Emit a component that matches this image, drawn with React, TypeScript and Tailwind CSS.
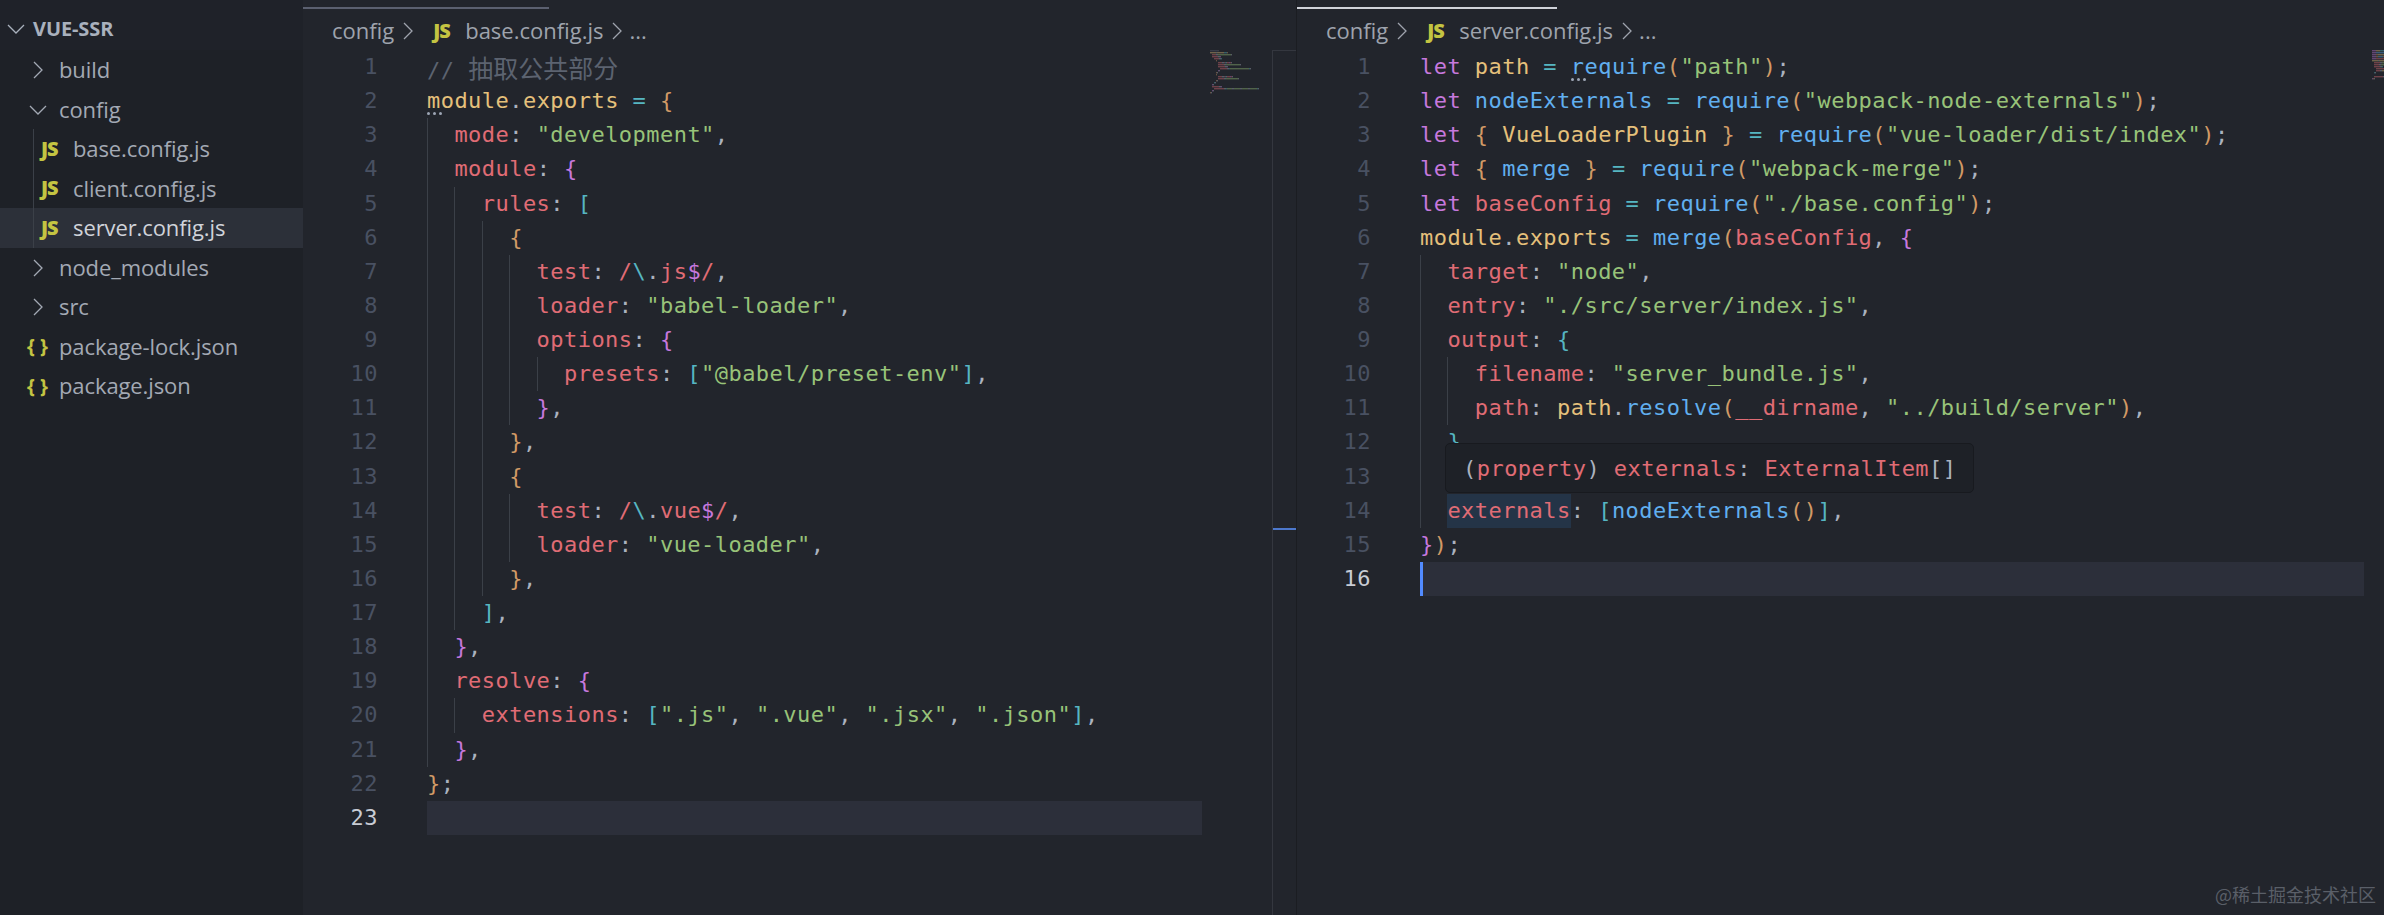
import type { ReactNode } from 'react';

const RED = 'text-[#e06c75]';
const GREEN = 'text-[#98c379]';
const YELLOW = 'text-[#e5c07b]';
const ORANGE = 'text-[#d19a66]';
const BLUE = 'text-[#61afef]';
const PURPLE = 'text-[#c678dd]';
const CYAN = 'text-[#56b6c2]';
const GRAY = 'text-[#abb2bf]';
const COMMENT = 'text-[#5c6370]';

const minimapColors: Record<string, string> = {
  [RED]: '#e06c75',
  [GREEN]: '#98c379',
  [YELLOW]: '#e5c07b',
  [ORANGE]: '#d19a66',
  [BLUE]: '#61afef',
  [PURPLE]: '#c678dd',
  [CYAN]: '#56b6c2',
  [GRAY]: '#abb2bf',
  [COMMENT]: '#5c6370',
};

type Token = [string, string, string?];
type Line = { indent: number; tokens: Token[] };

const l = (indent: number, ...tokens: Token[]): Line => ({ indent, tokens });

const baseConfigLines: Line[] = [
  l(0, ['// ', COMMENT], ['抽取公共部分', COMMENT, 'cjk']),
  l(0, ['module', YELLOW], ['.', GRAY], ['exports', YELLOW], [' = ', CYAN], ['{', ORANGE]),
  l(1, ['mode', RED], [': ', GRAY], ['"development"', GREEN], [',', GRAY]),
  l(1, ['module', RED], [': ', GRAY], ['{', PURPLE]),
  l(2, ['rules', RED], [': ', GRAY], ['[', CYAN]),
  l(3, ['{', ORANGE]),
  l(4, ['test', RED], [': ', GRAY], ['/', RED], ['\\', CYAN], ['.', GRAY], ['js', RED], ['$', PURPLE], ['/', RED], [',', GRAY]),
  l(4, ['loader', RED], [': ', GRAY], ['"babel-loader"', GREEN], [',', GRAY]),
  l(4, ['options', RED], [': ', GRAY], ['{', PURPLE]),
  l(5, ['presets', RED], [': ', GRAY], ['[', CYAN], ['"@babel/preset-env"', GREEN], [']', CYAN], [',', GRAY]),
  l(4, ['}', PURPLE], [',', GRAY]),
  l(3, ['}', ORANGE], [',', GRAY]),
  l(3, ['{', ORANGE]),
  l(4, ['test', RED], [': ', GRAY], ['/', RED], ['\\', CYAN], ['.', GRAY], ['vue', RED], ['$', PURPLE], ['/', RED], [',', GRAY]),
  l(4, ['loader', RED], [': ', GRAY], ['"vue-loader"', GREEN], [',', GRAY]),
  l(3, ['}', ORANGE], [',', GRAY]),
  l(2, [']', CYAN], [',', GRAY]),
  l(1, ['}', PURPLE], [',', GRAY]),
  l(1, ['resolve', RED], [': ', GRAY], ['{', PURPLE]),
  l(2, ['extensions', RED], [': ', GRAY], ['[', CYAN], ['".js"', GREEN], [', ', GRAY], ['".vue"', GREEN], [', ', GRAY], ['".jsx"', GREEN], [', ', GRAY], ['".json"', GREEN], [']', CYAN], [',', GRAY]),
  l(1, ['}', PURPLE], [',', GRAY]),
  l(0, ['}', ORANGE], [';', GRAY]),
  l(0),
];

const req = (path: string): Token[] => [
  [' = ', CYAN],
  ['require', BLUE],
  ['(', ORANGE],
  [path, GREEN],
  [')', ORANGE],
  [';', GRAY],
];

const serverConfigLines: Line[] = [
  l(0, ['let ', PURPLE], ['path', YELLOW], ...req('"path"')),
  l(0, ['let ', PURPLE], ['nodeExternals', BLUE], ...req('"webpack-node-externals"')),
  l(0, ['let ', PURPLE], ['{ ', ORANGE], ['VueLoaderPlugin', YELLOW], [' }', ORANGE], ...req('"vue-loader/dist/index"')),
  l(0, ['let ', PURPLE], ['{ ', ORANGE], ['merge', BLUE], [' }', ORANGE], ...req('"webpack-merge"')),
  l(0, ['let ', PURPLE], ['baseConfig', RED], ...req('"./base.config"')),
  l(0, ['module', YELLOW], ['.', GRAY], ['exports', YELLOW], [' = ', CYAN], ['merge', BLUE], ['(', ORANGE], ['baseConfig', RED], [', ', GRAY], ['{', PURPLE]),
  l(1, ['target', RED], [': ', GRAY], ['"node"', GREEN], [',', GRAY]),
  l(1, ['entry', RED], [': ', GRAY], ['"./src/server/index.js"', GREEN], [',', GRAY]),
  l(1, ['output', RED], [': ', GRAY], ['{', CYAN]),
  l(2, ['filename', RED], [': ', GRAY], ['"server_bundle.js"', GREEN], [',', GRAY]),
  l(2, ['path', RED], [': ', GRAY], ['path', YELLOW], ['.', GRAY], ['resolve', BLUE], ['(', ORANGE], ['__dirname', RED], [', ', GRAY], ['"../build/server"', GREEN], [')', ORANGE], [',', GRAY]),
  l(1, ['}', CYAN], [',', GRAY]),
  l(1),
  l(1, ['externals', RED, 'hover'], [': ', GRAY], ['[', CYAN], ['nodeExternals', BLUE], ['(', ORANGE], [')', ORANGE], [']', CYAN], [',', GRAY]),
  l(0, ['}', PURPLE], [')', ORANGE], [';', GRAY]),
  l(0),
];

const Chevron = ({ open, className }: { open?: boolean; className?: string }) => (
  <svg viewBox="0 0 18 18" className={className} fill="none" stroke="currentColor" strokeWidth="1.3">
    <path d={open ? 'M1 5l8 8 8-8' : 'M5 1l8 8-8 8'} />
  </svg>
);

const JsIcon = ({ className = '' }: { className?: string }) => (
  <span className={`font-['Open_Sans',sans-serif] text-[20px] font-extrabold tracking-[-1px] text-[#c4c442] ${className}`}>JS</span>
);

const TreeFolder = ({ name, open }: { name: string; open?: boolean }) => (
  <div className="relative flex h-[39.5px] items-center pl-[59px]">
    <Chevron open={open} className="absolute left-[29px] top-[11px] h-[18px] w-[18px]" />
    {name}
  </div>
);

const TreeFile = ({ name, active }: { name: string; active?: boolean }) => (
  <div className={`flex h-[39.5px] items-center pl-[41px] ${active ? 'bg-[#2c3039] text-[#d0d3da]' : ''}`}>
    <JsIcon className="w-[32px]" />
    {name}
  </div>
);

const TreeJson = ({ name }: { name: string }) => (
  <div className="flex h-[39.5px] items-center pl-[27px]">
    <span className="w-[32px] text-[20px] font-bold tracking-[0px] text-[#c4c442]">{'{ }'}</span>
    {name}
  </div>
);

const Sidebar = () => (
  <aside className="flex h-full w-[303px] shrink-0 flex-col bg-[#1e2127] font-['Open_Sans',sans-serif] text-[22px] tracking-[-0.1px] text-[#a3a9b4]">
    <div className="relative flex h-[50px] shrink-0 items-center bg-[#1f2229] pl-[33px] pt-[8px] text-[20px] font-bold text-[#a9b1bd]">
      <Chevron open className="absolute left-[7px] top-[20px] h-[18px] w-[18px]" />
      VUE-SSR
    </div>
    <TreeFolder name="build" />
    <TreeFolder name="config" open />
    <div className="relative">
      <div className="absolute bottom-0 left-[33px] top-0 w-px bg-[#3b4048]" />
      <TreeFile name="base.config.js" />
      <TreeFile name="client.config.js" />
      <TreeFile name="server.config.js" active />
    </div>
    <TreeFolder name="node_modules" />
    <TreeFolder name="src" />
    <TreeJson name="package-lock.json" />
    <TreeJson name="package.json" />
  </aside>
);

const Breadcrumb = ({ file, tabClass }: { file: string; tabClass: string }) => (
  <div className="h-[50px] shrink-0 font-['Open_Sans',sans-serif] text-[22px] text-[#9ea3ad]">
    <div className={`h-[2px] translate-y-[7px] ${tabClass}`} />
    <div className="flex h-[48px] items-center pl-[29px] pt-[9px]">
      <span>config</span>
      <Chevron className="ml-[5px] h-[18px] w-[18px]" />
      <JsIcon className="ml-[16px] w-[32px]" />
      <span>{file}</span>
      <Chevron className="ml-[5px] h-[18px] w-[18px]" />
      <span className="ml-[3px]">...</span>
    </div>
  </div>
);

const CodeText = ({ token }: { token: Token }) => {
  const [text, color, kind] = token;
  if (kind === 'cjk') {
    return <span className={`font-['Noto_Sans_CJK_SC',sans-serif] text-[25px] tracking-normal ${color}`}>{text}</span>;
  }
  if (kind === 'hover') {
    return <span className={`inline-block h-[34.13px] bg-[#243447] ${color}`}>{text}</span>;
  }
  return <span className={color}>{text}</span>;
};

const SquiggleDots = ({ className }: { className: string }) => (
  <span className={`absolute bottom-[3px] flex gap-[3px] ${className}`}>
    <span className="h-[3px] w-[3px] rounded-full bg-[#9da5b4]" />
    <span className="h-[3px] w-[3px] rounded-full bg-[#9da5b4]" />
    <span className="h-[3px] w-[3px] rounded-full bg-[#9da5b4]" />
  </span>
);

const CodeArea = ({
  lines,
  gutterWidth,
  dotsLine,
  dotsClass,
  focused,
}: {
  lines: Line[];
  gutterWidth: string;
  dotsLine: number;
  dotsClass: string;
  focused?: boolean;
}) => (
  <div className="min-w-0 flex-1 font-['DejaVu_Sans_Mono',monospace] text-[22px] tracking-[0.46px]">
    {lines.map((line, i) => {
      const current = i === lines.length - 1;
      return (
        <div key={i} className="flex h-[34.13px] leading-[34.13px] whitespace-pre">
          <div className={`${gutterWidth} shrink-0 text-right ${current ? 'text-[#c8ccd4]' : 'text-[#495162]'}`}>{i + 1}</div>
          <div className={`relative ml-[49px] flex flex-1 ${current ? 'bg-[#2c2f3a]' : ''}`}>
            {current && focused && <span className="h-full w-[3px] bg-[#528bff]" />}
            {Array.from({ length: line.indent }).map((_, g) => (
              <span key={g} className="h-full w-[27.4px] shrink-0 border-l border-[#3b4048]" />
            ))}
            <span>
              {line.tokens.map((t, k) => (
                <CodeText key={k} token={t} />
              ))}
            </span>
            {dotsLine === i && <SquiggleDots className={dotsClass} />}
          </div>
        </div>
      );
    })}
  </div>
);

const Minimap = ({ lines }: { lines: Line[] }) => (
  <svg className="block opacity-40 blur-[0.6px]" viewBox={`0 0 62 ${lines.length * 2}`} width="62" height={lines.length * 2}>
    {lines.map((line, y) => {
      let x = line.indent * 2;
      return line.tokens.map((t, k) => {
        const w = t[0].length;
        const r = <rect key={`${y}-${k}`} x={x} y={y * 2} width={w} height={1.4} fill={minimapColors[t[1]]} />;
        x += w;
        return r;
      });
    })}
  </svg>
);

const Panel = ({ children, className }: { children: ReactNode; className: string }) => (
  <section className={`relative flex h-full flex-col bg-[#22252c] ${className}`}>{children}</section>
);

export default function App() {
  return (
    <div className="relative flex h-[915px] w-[2384px] overflow-hidden bg-[#22252c]">
      <Sidebar />

      <Panel className="w-[994px] shrink-0 border-r border-[#1b1d22]">
        <Breadcrumb file="base.config.js" tabClass="w-[246px] bg-[#5b6070]" />
        <div className="flex min-h-0 flex-1">
          <CodeArea lines={baseConfigLines} gutterWidth="w-[75px]" dotsLine={1} dotsClass="left-0" />
          <div className="w-[70px] shrink-0 pl-[8px]">
            <Minimap lines={baseConfigLines} />
          </div>
          <div className="relative w-[24px] shrink-0 border-l border-t border-[#34373f]">
            <div className="absolute left-0 top-[477px] h-[2px] w-full bg-[#4d78cc]" />
          </div>
        </div>
      </Panel>

      <Panel className="min-w-0 flex-1">
        <Breadcrumb file="server.config.js" tabClass="w-[260px] bg-[#d0d3da]" />
        <div className="flex min-h-0 flex-1">
          <CodeArea lines={serverConfigLines} gutterWidth="w-[74px]" dotsLine={0} dotsClass="left-[151px]" focused />
          <div className="w-[20px] shrink-0 overflow-hidden pl-[8px]">
            <Minimap lines={serverConfigLines} />
          </div>
        </div>
        {/* hover tooltip over lines 12-13 */}
        <div className="absolute left-[148px] top-[443px] flex h-[50px] w-[529px] items-center rounded-[5px] border border-[#181a1f] bg-[#1e2127] pl-[17px] font-['DejaVu_Sans_Mono',monospace] text-[22px] tracking-[0.46px] whitespace-pre">
          <span className={GRAY}>(</span>
          <span className={RED}>property</span>
          <span className={GRAY}>) </span>
          <span className={RED}>externals</span>
          <span className={GRAY}>: </span>
          <span className={RED}>ExternalItem</span>
          <span className={GRAY}>[]</span>
        </div>
      </Panel>

      <div className="absolute bottom-[7px] right-[8px] font-['Noto_Sans_CJK_SC',sans-serif] text-[18px] text-[#5a5f68]">@稀土掘金技术社区</div>
    </div>
  );
}
